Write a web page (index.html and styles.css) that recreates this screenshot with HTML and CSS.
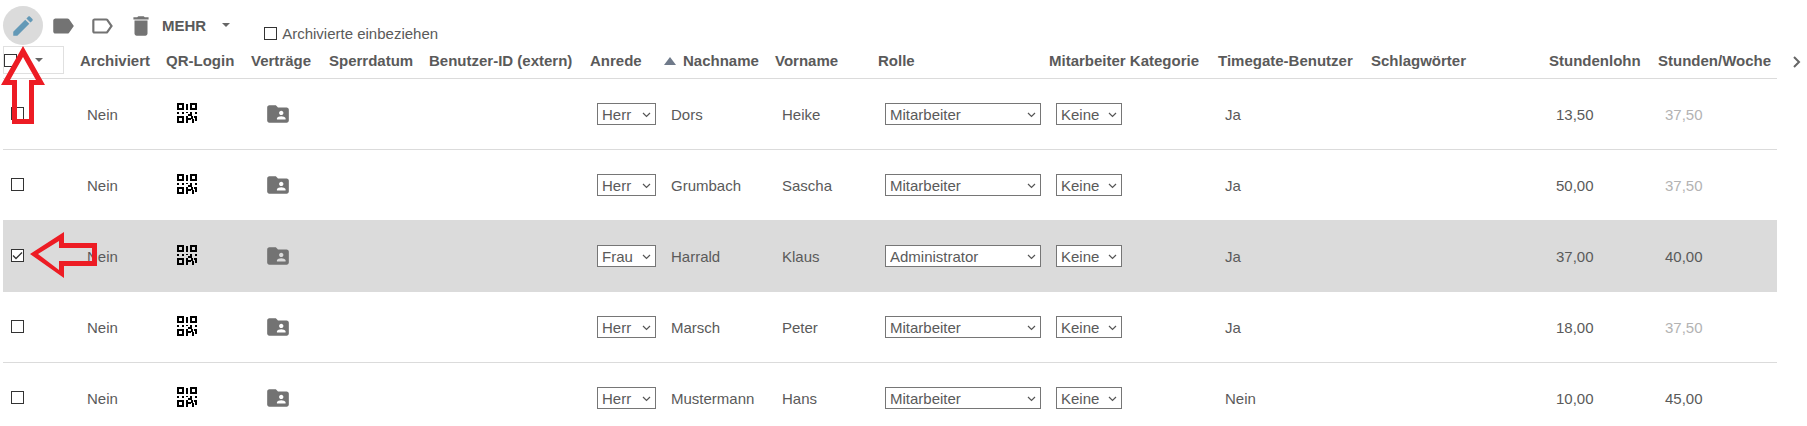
FILE: index.html
```
<!DOCTYPE html>
<html lang="de">
<head>
    <meta charset="UTF-8">
    <meta name="viewport" content="width=device-width, initial-scale=1.0">
    <title>Mitarbeiter</title>
    <link rel="stylesheet" href="styles.css">
</head>
<body>

    <!-- shared icons -->
    <svg class="sprite" aria-hidden="true">
        <symbol id="qr" viewBox="0 0 20 20">
            <path fill-rule="evenodd" d="M0 0h7v7H0zM2 2v3h3V2zM13 0h7v7h-7zM15 2v3h3V2zM0 13h7v7H0zM2 15v3h3v-3z"/>
            <path d="M9 1h2v6H9zM0 9h2v2H0zM5 9h2v2H5zM9 9h2v1H9zM13 9h2v4h-4v-2h2zM18 9h2v2h-2zM9 13h2v2h3v-2h2v3h-2v1h-3v3H9zM17 13h3v5h-2v-3h-1zM15 16h2v4h-2z"/>
        </symbol>
        <symbol id="folder" viewBox="0 0 24 24">
            <path d="M20 6h-8l-2-2H4c-1.100 0-1.990.9-1.990 2L2 18c0 1.100.9 2 2 2h16c1.100 0 2-.9 2-2V8c0-1.100-.9-2-2-2zm-5 3c1.100 0 2 .9 2 2s-.9 2-2 2-2-.9-2-2 .9-2 2-2zm4 8h-8v-1c0-1.330 2.670-2 4-2s4 .67 4 2v1z"/>
        </symbol>
    </svg>

    <div class="page">
        <div class="toolbar">
            <button class="icon-btn active" aria-label="Bearbeiten">
                <svg viewBox="0 0 24 24"><path d="M3 17.250V21h3.750L17.810 9.940l-3.750-3.750L3 17.250zM20.710 7.040c.39-.39.39-1.020 0-1.410l-2.340-2.340c-.39-.39-1.020-.39-1.410 0l-1.830 1.830 3.750 3.750 1.830-1.830z"/></svg>
            </button>
            <button class="icon-btn" aria-label="Schlagwort setzen">
                <svg viewBox="0 0 24 24"><path d="M17.630 5.840C17.270 5.330 16.670 5 16 5L5 5.010C3.900 5.010 3 5.900 3 7v10c0 1.100.9 1.990 2 1.990L16 19c.67 0 1.270-.33 1.630-.84L22 12l-4.370-6.160z"/></svg>
            </button>
            <button class="icon-btn" aria-label="Schlagwort entfernen">
                <svg viewBox="0 0 24 24"><path d="M17.630 5.840C17.270 5.330 16.670 5 16 5L5 5.010C3.900 5.010 3 5.900 3 7v10c0 1.100.9 1.990 2 1.990L16 19c.67 0 1.270-.33 1.630-.84L22 12l-4.370-6.160zM16 17H5V7h11l3.550 5L16 17z"/></svg>
            </button>
            <button class="icon-btn" aria-label="Löschen">
                <svg viewBox="0 0 24 24"><path d="M6 19c0 1.100.9 2 2 2h8c1.100 0 2-.9 2-2V7H6v12zM19 4h-3.500l-1-1h-5l-1 1H5v2h14V4z"/></svg>
            </button>
            <button class="more-btn">MEHR <span class="caret"></span></button>
            <label class="archive"><input type="checkbox"> Archivierte einbeziehen</label>
        </div>

        <div class="list">
            <table>
                <colgroup>
                    <col class="c-check"><col class="c-archive"><col class="c-qr"><col class="c-contract">
                    <col class="c-lock"><col class="c-id"><col class="c-title"><col class="c-last">
                    <col class="c-first"><col class="c-role"><col class="c-cat"><col class="c-gate">
                    <col class="c-tags"><col class="c-wage"><col class="c-hours">
                </colgroup>
                <thead>
                    <tr>
                        <th class="check-head">
                            <div class="select-all">
                                <input type="checkbox" aria-label="Alle auswählen">
                                <button aria-label="Auswahl"><span class="caret"></span></button>
                            </div>
                        </th>
                        <th>Archiviert</th>
                        <th>QR-Login</th>
                        <th>Verträge</th>
                        <th>Sperrdatum</th>
                        <th>Benutzer-ID (extern)</th>
                        <th>Anrede</th>
                        <th><span class="sort"></span>Nachname</th>
                        <th>Vorname</th>
                        <th>Rolle</th>
                        <th>Mitarbeiter Kategorie</th>
                        <th>Timegate-Benutzer</th>
                        <th>Schlagwörter</th>
                        <th>Stundenlohn</th>
                        <th>Stunden/Woche</th>
                    </tr>
                </thead>
                <tbody>
                    <tr>
                        <td class="check"><input type="checkbox" aria-label="Dors auswählen"></td>
                        <td>Nein</td>
                        <td><svg class="qr"><use href="#qr"/></svg></td>
                        <td><svg class="folder"><use href="#folder"/></svg></td>
                        <td></td>
                        <td></td>
                        <td><select class="s-title" aria-label="Anrede"><option>Herr</option><option>Frau</option></select></td>
                        <td>Dors</td>
                        <td>Heike</td>
                        <td><select class="s-role" aria-label="Rolle"><option>Mitarbeiter</option><option>Administrator</option></select></td>
                        <td><select class="s-cat" aria-label="Kategorie"><option>Keine</option></select></td>
                        <td>Ja</td>
                        <td></td>
                        <td>13,50</td>
                        <td class="default">37,50</td>
                    </tr>
                    <tr>
                        <td class="check"><input type="checkbox" aria-label="Grumbach auswählen"></td>
                        <td>Nein</td>
                        <td><svg class="qr"><use href="#qr"/></svg></td>
                        <td><svg class="folder"><use href="#folder"/></svg></td>
                        <td></td>
                        <td></td>
                        <td><select class="s-title" aria-label="Anrede"><option>Herr</option><option>Frau</option></select></td>
                        <td>Grumbach</td>
                        <td>Sascha</td>
                        <td><select class="s-role" aria-label="Rolle"><option>Mitarbeiter</option><option>Administrator</option></select></td>
                        <td><select class="s-cat" aria-label="Kategorie"><option>Keine</option></select></td>
                        <td>Ja</td>
                        <td></td>
                        <td>50,00</td>
                        <td class="default">37,50</td>
                    </tr>
                    <tr class="selected">
                        <td class="check"><input type="checkbox" aria-label="Harrald auswählen" checked></td>
                        <td>Nein</td>
                        <td><svg class="qr"><use href="#qr"/></svg></td>
                        <td><svg class="folder"><use href="#folder"/></svg></td>
                        <td></td>
                        <td></td>
                        <td><select class="s-title" aria-label="Anrede"><option>Herr</option><option selected>Frau</option></select></td>
                        <td>Harrald</td>
                        <td>Klaus</td>
                        <td><select class="s-role" aria-label="Rolle"><option>Mitarbeiter</option><option selected>Administrator</option></select></td>
                        <td><select class="s-cat" aria-label="Kategorie"><option>Keine</option></select></td>
                        <td>Ja</td>
                        <td></td>
                        <td>37,00</td>
                        <td>40,00</td>
                    </tr>
                    <tr>
                        <td class="check"><input type="checkbox" aria-label="Marsch auswählen"></td>
                        <td>Nein</td>
                        <td><svg class="qr"><use href="#qr"/></svg></td>
                        <td><svg class="folder"><use href="#folder"/></svg></td>
                        <td></td>
                        <td></td>
                        <td><select class="s-title" aria-label="Anrede"><option>Herr</option><option>Frau</option></select></td>
                        <td>Marsch</td>
                        <td>Peter</td>
                        <td><select class="s-role" aria-label="Rolle"><option>Mitarbeiter</option><option>Administrator</option></select></td>
                        <td><select class="s-cat" aria-label="Kategorie"><option>Keine</option></select></td>
                        <td>Ja</td>
                        <td></td>
                        <td>18,00</td>
                        <td class="default">37,50</td>
                    </tr>
                    <tr>
                        <td class="check"><input type="checkbox" aria-label="Mustermann auswählen"></td>
                        <td>Nein</td>
                        <td><svg class="qr"><use href="#qr"/></svg></td>
                        <td><svg class="folder"><use href="#folder"/></svg></td>
                        <td></td>
                        <td></td>
                        <td><select class="s-title" aria-label="Anrede"><option>Herr</option><option>Frau</option></select></td>
                        <td>Mustermann</td>
                        <td>Hans</td>
                        <td><select class="s-role" aria-label="Rolle"><option>Mitarbeiter</option><option>Administrator</option></select></td>
                        <td><select class="s-cat" aria-label="Kategorie"><option>Keine</option></select></td>
                        <td>Nein</td>
                        <td></td>
                        <td>10,00</td>
                        <td>45,00</td>
                    </tr>
                </tbody>
            </table>
            <button class="next-btn" aria-label="Weitere Spalten">
                <svg viewBox="0 0 8 12"><path d="M1 1l5 5-5 5"/></svg>
            </button>
        </div>

        <!-- red hint arrows -->
        <svg class="hint hint-edit" viewBox="0 0 46 80" aria-hidden="true">
            <path fill-rule="evenodd" d="M23 0L45 39H34V78H12V39H1zM23 11L10 34H17V73H29V34H36z"/>
        </svg>
        <svg class="hint hint-row" viewBox="0 0 68 46" aria-hidden="true">
            <path fill-rule="evenodd" d="M0 22L34 0V11H67V34H34V46zM8 22L29 38V29H62V16H29V9z"/>
        </svg>
    </div>

</body>
</html>
```
FILE: styles.css
```
* {
    box-sizing: border-box;
}

body {
    margin: 0;
    background: #fff;
    color: #5a5a5a;
    font-family: "Liberation Sans", Arial, sans-serif;
    font-size: 15px;
}

.sprite {
    display: none;
}

.page {
    position: relative;
    height: 100vh;
    padding: 6px 0 0 3px;
    overflow: hidden;
}

button {
    padding: 0;
    border: none;
    background: none;
    color: inherit;
    font: inherit;
    cursor: pointer;
}

/* toolbar */
.toolbar {
    display: flex;
    align-items: flex-start;
    height: 40px;
}

.icon-btn {
    display: flex;
    align-items: center;
    justify-content: center;
    width: 39px;
    height: 39px;
}

.icon-btn svg {
    width: 26px;
    height: 26px;
    fill: #737373;
}

.icon-btn.active {
    width: 40px;
    border-radius: 50%;
    background: #dbdbdb;
}

.icon-btn.active svg {
    fill: #6399b7;
}

.more-btn {
    display: flex;
    align-items: center;
    gap: 16px;
    height: 38px;
    margin-left: 2px;
    font-weight: bold;
}

.caret {
    width: 0;
    border: 4px solid transparent;
    border-top-color: #666;
    border-bottom: none;
}

.archive {
    display: flex;
    align-items: center;
    gap: 5px;
    margin: 19px 0 0 34px;
}

input[type="checkbox"] {
    appearance: none;
    display: block;
    flex: none;
    width: 13px;
    height: 13px;
    margin: 0;
    border: 1px solid #333;
    background: #fff center / 11px 11px no-repeat;
}

input[type="checkbox"]:checked {
    background-image: url("data:image/svg+xml,%3Csvg xmlns='http://www.w3.org/2000/svg' viewBox='0 0 11 11'%3E%3Cpath d='M1 5.500l3 3L10 2.500' fill='none' stroke='%23333' stroke-width='1.300'/%3E%3C/svg%3E");
}

/* table */
.list {
    display: flex;
    align-items: flex-start;
}

table {
    flex: 1;
    width: 100%;
    table-layout: fixed;
    border-collapse: separate;
    border-spacing: 0;
}

.c-check { width: 69px; }
.c-archive { width: 86px; }
.c-qr { width: 85px; }
.c-contract { width: 78px; }
.c-lock { width: 100px; }
.c-id { width: 161px; }
.c-title { width: 74px; }
.c-last { width: 111px; }
.c-first { width: 103px; }
.c-role { width: 171px; }
.c-cat { width: 169px; }
.c-gate { width: 153px; }
.c-tags { width: 178px; }
.c-wage { width: 109px; }
.c-hours { width: 127px; }

th {
    height: 33px;
    padding: 0 0 4px 8px;
    border-bottom: 1px solid #dbdbdb;
    text-align: left;
    white-space: nowrap;
}

td {
    height: 71px;
    padding: 0 0 0 15px;
    border-bottom: 1px solid #dbdbdb;
}

.check-head {
    padding: 0 0 4px;
}

.select-all {
    display: flex;
    align-items: center;
    gap: 18px;
    width: 61px;
    height: 28px;
    border: 1px solid #e0e0e0;
}

.select-all button {
    display: flex;
}

.sort {
    display: inline-block;
    margin-right: 7px;
    border: 6px solid transparent;
    border-top: none;
    border-bottom: 8px solid #6f7a8a;
    vertical-align: 1px;
}

.check {
    padding: 0 0 2px 8px;
}

.selected td {
    background: #dbdbdb;
}

.default {
    color: #b3b3b3;
}

.qr,
.folder {
    display: block;
    fill: #737373;
}

.qr {
    width: 20px;
    height: 20px;
    margin: 0 0 3px 4px;
    fill: #000;
}

.folder {
    width: 26px;
    height: 26px;
    margin-left: 7px;
}

select {
    appearance: none;
    display: block;
    height: 22px;
    padding: 0 4px;
    border: 1px solid #767676;
    border-radius: 0;
    background: #fff url("data:image/svg+xml,%3Csvg xmlns='http://www.w3.org/2000/svg' viewBox='0 0 9 6'%3E%3Cpath d='M1 1l3.500 3.500L8 1' fill='none' stroke='%23555' stroke-width='1.200'/%3E%3C/svg%3E") right 4px top 8px / 9px 6px no-repeat;
    color: inherit;
    font: inherit;
}

.s-title { width: 59px; }
.s-role { width: 156px; }
.s-cat { width: 66px; }

.next-btn {
    display: flex;
    justify-content: center;
    width: 30px;
    padding: 10px 0 0 10px;
}

.next-btn svg {
    width: 8px;
    height: 12px;
    fill: none;
    stroke: #666;
    stroke-width: 2;
}

/* hints lie over the list */
.hint {
    position: absolute;
    fill: #ed1c24;
    pointer-events: none;
}

.hint-edit {
    top: 46px;
    left: 0;
    width: 46px;
    height: 80px;
}

.hint-row {
    top: 232px;
    left: 30px;
    width: 68px;
    height: 46px;
}
```
